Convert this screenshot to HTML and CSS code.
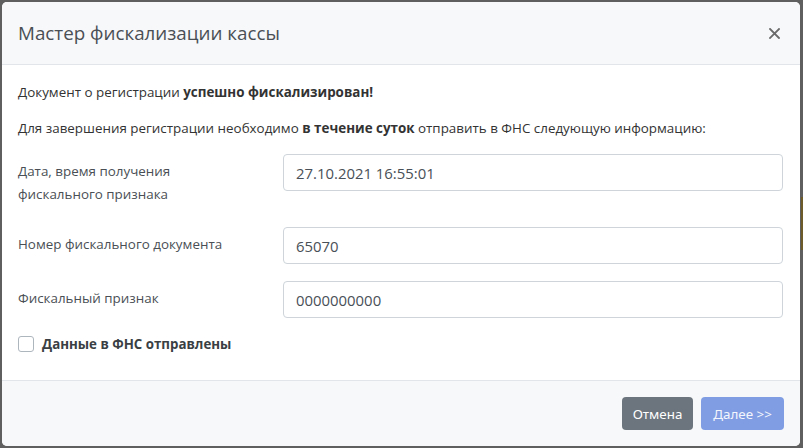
FILE: index.html
```html
<!DOCTYPE html>
<html lang="ru">
<head>
<meta charset="utf-8">
<title>Мастер фискализации кассы</title>
<link rel="stylesheet" href="styles.css">
</head>
<body>
<div class="backdrop">
  <div class="modal">
    <div class="modal-header">
      <h5 class="modal-title">Мастер фискализации кассы</h5>
      <button class="close" type="button" aria-label="Закрыть">
        <svg width="11" height="11" viewBox="0 0 11 11"><path d="M1 1L10 10M10 1L1 10" stroke="#6a6a6a" stroke-width="1.8" stroke-linecap="square"/></svg>
      </button>
    </div>
    <div class="modal-body">
      <p class="para">Документ о регистрации <b>успешно фискализирован!</b></p>
      <p class="para">Для завершения регистрации необходимо <b>в течение суток</b> отправить в ФНС следующую информацию:</p>
      <div class="form-row">
        <label class="col-label">Дата, время получения<br>фискального признака</label>
        <input class="form-control" type="text" value="27.10.2021 16:55:01">
      </div>
      <div class="form-row">
        <label class="col-label">Номер фискального документа</label>
        <input class="form-control" type="text" value="65070">
      </div>
      <div class="form-row">
        <label class="col-label">Фискальный признак</label>
        <input class="form-control" type="text" value="0000000000">
      </div>
      <label class="check">
        <span class="check-box"></span>
        <span class="check-label">Данные в ФНС отправлены</span>
      </label>
    </div>
    <div class="modal-footer">
      <button class="btn btn-secondary" type="button">Отмена</button>
      <button class="btn btn-primary" type="button" disabled>Далее &gt;&gt;</button>
    </div>
  </div>
  <div class="side-strip"></div>
</div>
</body>
</html>
```
FILE: styles.css
```css
html, body {
  margin: 0;
  padding: 0;
  height: 100%;
}
body {
  background: #5f5f5f;
  font-family: "Open Sans", "Noto Sans", sans-serif;
  color: #212529;
}
.backdrop {
  display: flex;
  align-items: flex-start;
  padding: 2px 0 0 2px;
  position: relative;
  height: 448px;
  box-sizing: border-box;
}
.side-strip {
  position: absolute;
  left: 801px;
  top: 197px;
  width: 2px;
  height: 53px;
  background: #6e5b2a;
}
.modal {
  width: 798px;
  height: 444px;
  background: #fff;
  border-radius: 5px;
  overflow: hidden;
  display: flex;
  flex-direction: column;
}
.modal-header {
  height: 62px;
  background: #f7f8fa;
  border-bottom: 1px solid #e2e6ea;
  display: flex;
  align-items: center;
  justify-content: space-between;
  padding: 0 16px;
  box-sizing: content-box;
}
.modal-title {
  margin: 0;
  font-size: 18.8px;
  font-weight: 400;
  color: #4a4f55;
  padding-bottom: 1px;
}
.close {
  border: 0;
  background: transparent;
  padding: 0;
  margin-right: 4px;
  width: 11px;
  height: 11px;
  display: flex;
}
.modal-body {
  flex: 1;
  padding: 17px 17px 0 16px;
}
.para {
  margin: 0 0 16px;
  font-size: 13.4px;
  line-height: 20px;
  color: #333;
}
.para b {
  font-weight: 700;
}
.form-row {
  display: grid;
  grid-template-columns: 265px 1fr;
  align-items: start;
  margin-bottom: 17px;
}
.para + .form-row {
  margin-top: 6px;
}
.col-label {
  font-size: 13.4px;
  line-height: 23px;
  padding: 6px 0 4px;
  color: #4a4f55;
}
.form-control {
  height: 37px;
  box-sizing: border-box;
  border: 1px solid #ced4da;
  border-radius: 4px;
  padding: 0 12px;
  font-family: inherit;
  font-size: 14.9px;
  color: #495057;
  background: #fff;
  width: 100%;
}
.check {
  display: flex;
  align-items: center;
  gap: 8px;
  margin-top: 3px;
}
.check-box {
  width: 14px;
  height: 14px;
  border: 1px solid #adb5bd;
  border-radius: 3px;
  background: #fff;
}
.check-label {
  font-size: 13.3px;
  font-weight: 700;
  color: #3a3f44;
}
.modal-footer {
  height: 33px;
  padding: 16px 16px 16px;
  background: #f7f8fa;
  border-top: 1px solid #e2e6ea;
  display: flex;
  justify-content: flex-end;
  gap: 8px;
}
.btn {
  height: 33px;
  border: 0;
  border-radius: 4px;
  font-family: "Noto Sans", "Open Sans", sans-serif;
  font-size: 13.4px;
  color: #fff;
  padding: 0 8px;
}
.btn-secondary {
  background: #6c757d;
  width: 71px;
}
.btn-primary {
  background: #809de3;
  width: 83px;
  color: #f3f6fd;
}
```
